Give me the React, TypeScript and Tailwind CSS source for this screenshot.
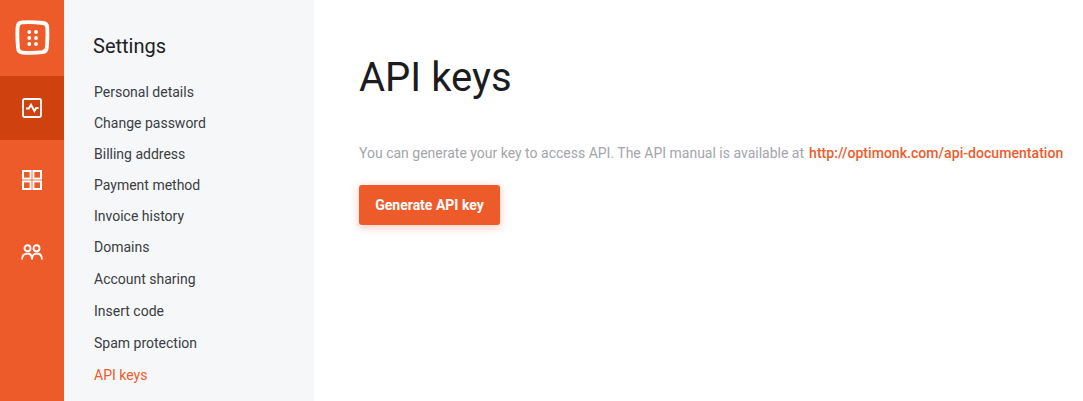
const menu = [
  'Personal details',
  'Change password',
  'Billing address',
  'Payment method',
  'Invoice history',
  'Domains',
  'Account sharing',
  'Insert code',
  'Spam protection',
];

function Logo() {
  return (
    <svg width="36" height="36" viewBox="0 0 36 36" fill="none">
      <path
        d="M8 3.4 C14 3 22 3.2 29 4 C31.8 4.3 33 5.4 33.2 8 C33.6 14 33.4 22 32.8 28.5 C32.6 31.4 31.2 32.8 28.5 33.2 C22 34 14 34 8.5 33.6 C5.6 33.4 4.2 32 4 29.2 C3.4 22 3.2 14 3.6 8 C3.8 5 5.2 3.6 8 3.4 Z"
        stroke="white"
        strokeWidth="3.8"
      />
      <g fill="white">
        <circle cx="15.3" cy="13" r="1.9" />
        <circle cx="22" cy="13" r="1.9" />
        <circle cx="15.3" cy="19" r="1.9" />
        <circle cx="22" cy="19" r="1.9" />
        <circle cx="15.3" cy="25" r="1.9" />
        <circle cx="22" cy="25" r="1.9" />
      </g>
    </svg>
  );
}

function ActivityIcon() {
  return (
    <svg width="20" height="20" viewBox="0 0 20 20" fill="none" stroke="white">
      <rect x="1" y="1" width="18" height="18" rx="1.5" strokeWidth="1.8" />
      <path d="M4 10.5 H6.8 L9 6.8 L12.4 13 L14.2 10 H16.6" strokeWidth="2" />
    </svg>
  );
}

function GridIcon() {
  return (
    <svg width="20" height="20" viewBox="0 0 20 20" fill="none" stroke="white" strokeWidth="2">
      <rect x="1" y="1" width="7.6" height="7.6" />
      <rect x="11.4" y="1" width="7.6" height="7.6" />
      <rect x="1" y="11.4" width="7.6" height="7.6" />
      <rect x="11.4" y="11.4" width="7.6" height="7.6" />
    </svg>
  );
}

function UsersIcon() {
  return (
    <svg width="22" height="16" viewBox="0 0 22 16" fill="none" stroke="white" strokeWidth="1.9">
      <circle cx="6.5" cy="4.2" r="3" />
      <circle cx="15.5" cy="4.2" r="3" />
      <path d="M1 15.5 C1 11.5 3.5 9.5 6.5 9.5 C9 9.5 11 11.5 11 15.5 C11 11.5 13 9.5 15.5 9.5 C18.5 9.5 21 11.5 21 15.5" />
    </svg>
  );
}

export default function App() {
  return (
    <div className="flex h-[401px] w-[1083px] overflow-hidden bg-white font-['Roboto',sans-serif]">
      <div className="flex w-16 shrink-0 flex-col bg-[#ee5b2a]">
        <div className="flex h-[76px] items-center justify-center pb-[2px]">
          <Logo />
        </div>
        <div className="flex h-16 items-center justify-center bg-[#cf410e]">
          <ActivityIcon />
        </div>
        <div className="flex h-20 items-center justify-center">
          <GridIcon />
        </div>
        <div className="flex h-16 items-center justify-center">
          <UsersIcon />
        </div>
      </div>

      <div className="w-[250px] shrink-0 bg-[#f6f7f9] pl-[29px] pt-[34px]">
        <div className="text-[20px] leading-6 text-[#202124]">Settings</div>
        <div className="mt-[19px] flex flex-col pl-px text-[14px] text-[#3a3d42]">
          {menu.map((item, i) => (
            <div key={item} className={i < 6 ? 'h-[31px] leading-[31px]' : 'h-8 leading-8'}>
              {item}
            </div>
          ))}
          <div className="h-8 leading-8 text-[#ee5b2a]">API keys</div>
        </div>
      </div>

      <div className="flex-1 pl-[45px] pt-[53px]">
        <h1 className="text-[40px] leading-[50px] text-[#1c1c1e]">API keys</h1>
        <div className="mt-[40px] flex items-center whitespace-nowrap text-[14px] leading-5">
          <span className="text-[#a3a5aa]">You can generate your key to access API. The API manual is available at</span>
          <a className="ml-[5px] font-medium tracking-[0.05px] text-[#ee5b2a]">http://optimonk.com/api-documentation</a>
        </div>
        <button className="mt-[22px] h-10 w-[141px] rounded-[3px] bg-[#ee5b2a] text-[14px] font-bold text-white shadow-[0_2px_8px_rgba(240,90,41,0.35)]">
          Generate API key
        </button>
      </div>
    </div>
  );
}
